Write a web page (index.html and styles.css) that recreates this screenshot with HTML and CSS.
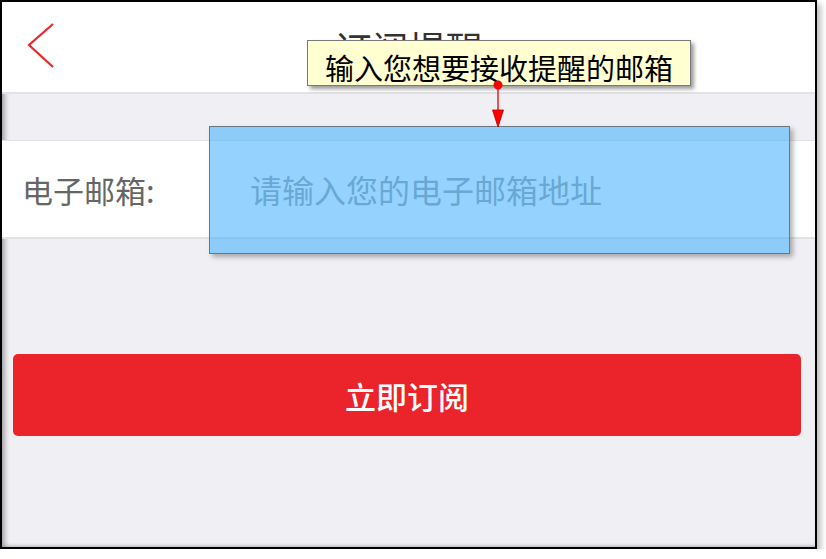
FILE: index.html
```html
<!DOCTYPE html>
<html lang="zh-CN">
<head>
    <meta charset="UTF-8">
    <meta name="viewport" content="width=device-width, initial-scale=1.0">
    <title>订阅提醒</title>
    <link rel="stylesheet" href="styles.css">
</head>
<body>

    <div class="frame">
        <!-- Nav bar -->
        <header class="nav">
            <a class="back" href="#">
                <svg width="28" height="46" viewBox="0 0 28 46">
                    <polyline points="26,1 2,22 26,44" fill="none" stroke="#e8262b" stroke-width="2.2"/>
                </svg>
            </a>
            <h1 class="title">订阅提醒</h1>
        </header>

        <!-- Form -->
        <div class="form">
            <div class="row">
                <label class="label" for="email">电子邮箱:</label>
                <input class="email" id="email" type="text" placeholder="请输入您的电子邮箱地址">
            </div>
        </div>

        <button class="btn">立即订阅</button>

        <!-- Annotation overlay -->
        <div class="mark-box"></div>
        <div class="tip">输入您想要接收提醒的邮箱</div>
        <svg class="pointer" width="14" height="50" viewBox="0 0 14 50">
            <line x1="7" y1="6" x2="7" y2="32" stroke="#e00000" stroke-width="1.3"/>
            <polygon points="1.5,31 12.5,31 7,48" fill="#ff0000" stroke="#b00000" stroke-width="0.8"/>
            <circle cx="7" cy="6" r="4.2" fill="#ff0000" stroke="#c00000" stroke-width="0.6"/>
        </svg>
    </div>

</body>
</html>
```

FILE: styles.css
```css
/* General */
body {
    margin: 0;
    background: #fff;
    font-family: "Noto Sans CJK SC", "Noto Sans", sans-serif;
}

.frame {
    position: relative;
    box-sizing: border-box;
    width: 817px;
    height: 549px;
    border: 2px solid #000;
    background: #efeff4;
    box-shadow: 4px 4px 6px rgba(0,0,0,0.25), inset 5px 0 5px -2px rgba(0,0,0,0.3), inset 0 -3px 4px -2px rgba(0,0,0,0.2);
    overflow: hidden;
}

/* Nav bar */
.nav {
    height: 90px;
    background: #fff;
    border-bottom: 2px solid #e2e2e6;
    display: flex;
    align-items: center;
    position: relative;
}

.back {
    display: flex;
    margin-left: 25px;
    margin-top: -2px;
}

.title {
    position: absolute;
    left: 0;
    right: 0;
    top: 0;
    margin: 0;
    text-align: center;
    font-size: 37px;
    font-weight: normal;
    line-height: 92px;
    color: #333;
}

/* Form */
.form {
    margin-top: 46px;
    background: #fff;
    border-top: 1px solid #e2e2e6;
    border-bottom: 2px solid #e2e2e6;
}

.row {
    height: 96px;
    display: flex;
    align-items: center;
    padding-left: 20px;
}

.label {
    width: 228px;
    font-size: 31px;
    color: #666;
}

.email {
    flex: 1;
    border: none;
    outline: none;
    background: transparent;
    padding: 0;
    font-family: inherit;
    font-size: 32px;
    color: #333;
}

.email::placeholder {
    color: #a8a8a8;
}

/* Button */
.btn {
    display: block;
    margin: 115px 0 0 11px;
    width: 788px;
    height: 82px;
    border: none;
    border-radius: 5px;
    background: #ea242a;
    color: #fff;
    font-family: inherit;
    font-size: 31px;
    font-weight: 500;
    cursor: pointer;
}

/* Annotation overlay */
.mark-box {
    position: absolute;
    left: 207px;
    top: 124px;
    width: 581px;
    height: 128px;
    box-sizing: border-box;
    border: 1px solid #6e7680;
    background: rgba(43, 167, 253, 0.5);
    box-shadow: 3px 3px 5px rgba(0,0,0,0.3);
}

.pointer {
    position: absolute;
    left: 489px;
    top: 77px;
}

.tip {
    position: absolute;
    left: 305px;
    top: 38px;
    width: 384px;
    height: 46px;
    box-sizing: border-box;
    padding: 7px 0 0 17px;
    border: 1px solid #7a7a7a;
    background: #ffffd2;
    box-shadow: 3px 3px 4px rgba(0,0,0,0.4);
    font-size: 29px;
    line-height: 38px;
    color: #000;
    white-space: nowrap;
}
```
